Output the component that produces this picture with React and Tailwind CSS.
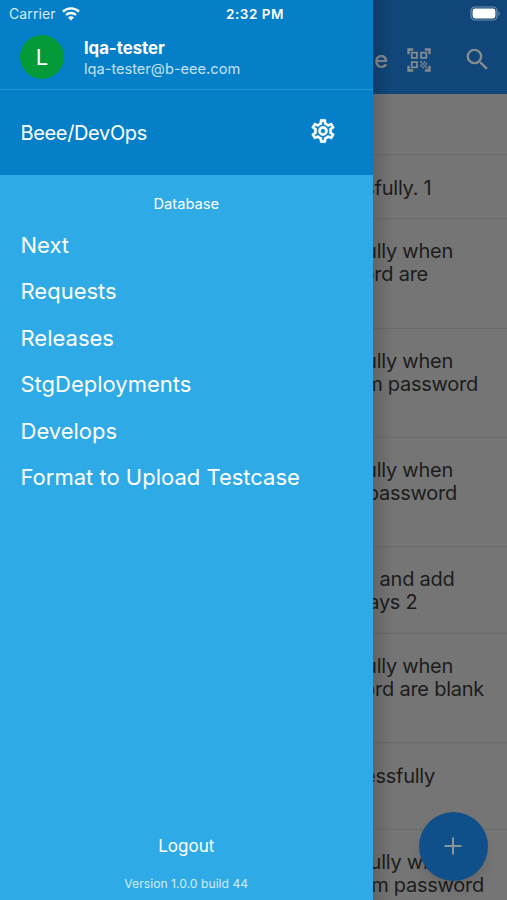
import React from 'react';
import { MdOutlineSettings, MdOutlineQrCodeScanner, MdSearch } from 'react-icons/md';

const databases = [
  'Next',
  'Requests',
  'Releases',
  'StgDeployments',
  'Develops',
  'Format to Upload Testcase',
];

// the drawer covers the start of every line, so only the tail of each is kept
const rows = [
  { height: 'h-[61px] pt-[21px]', lines: [] },
  { height: 'h-[64px] pt-[22px]', lines: [{ text: 'sfully. 1', width: 'w-[59px]' }] },
  { height: 'h-[110px] pt-[21px]', lines: [{ text: 'ully when', width: 'w-[80.5px]' }, { text: 'ord are', width: 'w-[55.5px]' }] },
  { height: 'h-[109px] pt-[21px]', lines: [{ text: 'ully when', width: 'w-[80.5px]' }, { text: 'm password', width: 'w-[105.5px]' }] },
  { height: 'h-[109px] pt-[21px]', lines: [{ text: 'ully when', width: 'w-[80.5px]' }, { text: 'password', width: 'w-[84.5px]' }] },
  { height: 'h-[87px] pt-[21px]', lines: [{ text: 'and add', width: 'w-[82px]' }, { text: 'ays 2', width: 'w-[45px]' }] },
  { height: 'h-[109px] pt-[21px]', lines: [{ text: 'ully when', width: 'w-[80.5px]' }, { text: 'ord are blank', width: 'w-[111.5px]' }] },
  { height: 'h-[87px] pt-[22px]', lines: [{ text: 'essfully', width: 'w-[62.5px]' }] },
  { height: 'h-[110px] pt-[21px]', lines: [{ text: 'ully when', width: 'w-[85px]' }, { text: 'm password', width: 'w-[111.5px]' }] },
];

function StatusBar() {
  return (
    <div className="absolute inset-x-0 top-0 z-20 flex h-7 items-center justify-between pl-[9px] pr-[6px] text-white">
      <div className="flex w-[100px] items-center gap-[6px] pb-[1px]">
        <span className="text-[14px] tracking-[0.1px] text-[#d5ebf7]">Carrier</span>
        <svg width="18" height="14" viewBox="0 0 18 14" fill="none">
          <path d="M1 4.7a11.4 11.4 0 0 1 16 0" stroke="white" strokeWidth="2.4" />
          <path d="M4 8a7.2 7.2 0 0 1 10 0" stroke="white" strokeWidth="2.3" />
          <path d="M9 13.6 6 10.6a4.3 4.3 0 0 1 6 0z" fill="white" />
        </svg>
      </div>
      <span className="text-[13.5px] font-semibold tracking-[0.5px]">2:32 PM</span>
      <div className="flex w-[100px] justify-end pb-[2px]">
        <svg width="31" height="15" viewBox="0 0 31 15" fill="none">
          <rect x="1" y="1" width="26" height="13" rx="4" stroke="#7391ae" strokeWidth="1.2" />
          <rect x="2.6" y="2.6" width="22.8" height="9.8" rx="2.4" fill="white" />
          <path d="M28.5 5.2c1.6.5 1.6 4.1 0 4.6z" fill="#7391ae" />
        </svg>
      </div>
    </div>
  );
}

function Drawer() {
  return (
    <aside className="flex w-[372.5px] shrink-0 flex-col bg-[#2eaae7] text-white">
      <div className="bg-[#0580c8]">
        <div className="flex h-[90px] items-center gap-5 border-b border-[#2398d8] pl-[20px] pt-[25px]">
          <div className="flex size-[44px] items-center justify-center rounded-full bg-[#049a38] text-[22px]">L</div>
          <div className="flex flex-col pt-[3px]">
            <span className="text-[16.8px] font-bold leading-[21px]">lqa-tester</span>
            <span className="text-[14.6px] leading-[20px] text-[#c4e2f4]">lqa-tester@b-eee.com</span>
          </div>
        </div>
        <div className="flex h-[85px] items-center justify-between pl-[20.5px] pr-[35.5px]">
          <span className="text-[20px] tracking-[-0.35px]">Beee/DevOps</span>
          <MdOutlineSettings className="mb-[3px] size-7 [&>path:first-child]:stroke-none" strokeWidth="0.3" />
        </div>
      </div>
      <p className="pt-[19px] text-center text-[14.7px] leading-5">Database</p>
      <nav className="flex flex-1 flex-col pl-[20.5px] pt-[8px]">
        {databases.map((name) => (
          <a key={name} className="flex h-[46.5px] items-center text-[22px]">{name}</a>
        ))}
      </nav>
      <div className="flex flex-col items-center pb-[8px]">
        <span className="text-[17px] leading-6">Logout</span>
        <span className="mt-[18px] text-[12.2px] leading-4 text-[#d0edfa]">Version 1.0.0 build 44</span>
      </div>
    </aside>
  );
}

export default function App() {
  return (
    <div className="relative flex h-[900px] w-[507px] overflow-hidden font-['Inter','Liberation_Sans',sans-serif]">
      <StatusBar />
      <Drawer />
      <main className="relative flex min-w-0 flex-1 flex-col overflow-hidden bg-[#757575]">
        <header className="flex h-[94px] shrink-0 items-center bg-[#10467a] pt-[25px] text-[#858b8f]">
          <span className="ml-[1.5px] text-[24px] font-medium">e</span>
          <MdOutlineQrCodeScanner className="ml-[16.5px] size-[28px]" />
          <MdSearch className="ml-[30px] size-[29px]" />
        </header>
        {rows.map((row, i) => (
          <div key={i} className={`${row.height} shrink-0 border-b border-[#6b6b6b] text-[20px] leading-[23px] tracking-[-0.25px] text-[#1c1c1c]`}>
            {row.lines.map((line) => (
              <p key={line.text} className={`${line.width} flex justify-end whitespace-nowrap`}>{line.text}</p>
            ))}
          </div>
        ))}
        <div className="absolute inset-y-0 left-0 w-5 bg-gradient-to-r from-black/15 to-transparent" />
        <button className="absolute bottom-[19.5px] right-[19.5px] flex size-[69px] items-center justify-center rounded-full bg-[#10508a] text-[#8d959c] shadow-lg">
          <svg width="18" height="18" viewBox="0 0 18 18" stroke="currentColor" strokeWidth="2">
            <path d="M9 0.5v17M0.5 9h17" />
          </svg>
        </button>
      </main>
    </div>
  );
}
